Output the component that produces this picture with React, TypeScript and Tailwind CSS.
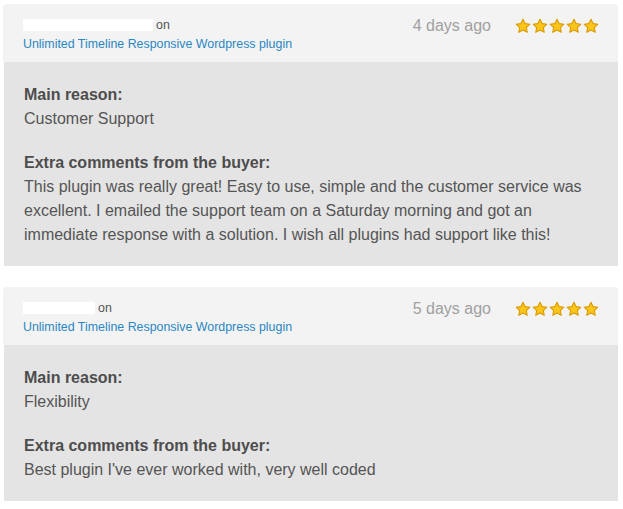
import React from "react";

const reviews = [
  {
    nameWidth: "w-[130px]",
    when: "4 days ago",
    reason: "Customer Support",
    comment:
      "This plugin was really great! Easy to use, simple and the customer service was excellent. I emailed the support team on a Saturday morning and got an immediate response with a solution. I wish all plugins had support like this!",
  },
  {
    nameWidth: "w-[72px]",
    when: "5 days ago",
    reason: "Flexibility",
    comment: "Best plugin I've ever worked with, very well coded",
  },
];

function Star() {
  return (
    <svg width="16" height="16" viewBox="0 0 24 24">
      <path
        d="M12 1.8l3.1 6.6 7.2.9-5.3 5 1.4 7.2L12 18l-6.4 3.5L7 14.3l-5.3-5 7.2-.9z"
        fill="#fbc51b"
        stroke="#d99a00"
        strokeWidth="1.6"
        strokeLinejoin="round"
      />
    </svg>
  );
}

export default function App() {
  return (
    <div className="bg-white min-h-[509px] pt-[4px] pl-[3px] font-['Liberation_Sans',Arial,sans-serif]">
      <div className="w-[615px] flex flex-col gap-[21px]">
        {reviews.map((r, i) => (
          <div key={i}>
            {/* Header */}
            <div className="bg-[#f3f3f3] rounded-t-[4px] h-[58px] pl-[20px] pr-[19px] pt-[11px] flex justify-between">
              <div className="text-[12.4px] leading-[20px]">
                <div className="flex items-center text-[#555]">
                  <span className={`${r.nameWidth} h-[12px] bg-white`} />
                  <span className="ml-[3px]">on</span>
                </div>
                <div className="text-[#2a87c2] -mt-[1px]">Unlimited Timeline Responsive Wordpress plugin</div>
              </div>
              <div className="flex items-start">
                <span className="text-[16px] leading-[22px] text-[#a0a0a0]">{r.when}</span>
                <div className="flex gap-[1px] ml-[24px] mt-[3px]">
                  <Star />
                  <Star />
                  <Star />
                  <Star />
                  <Star />
                </div>
              </div>
            </div>

            {/* Body */}
            <div className="bg-[#e4e4e4] ml-[1px] px-[20px] pt-[21px] pb-[19px] text-[16px] leading-[24px] text-[#555]">
              <div className="font-bold text-[#4d4d4d]">Main reason:</div>
              <div>{r.reason}</div>
              <div className="font-bold text-[#4d4d4d] mt-[20px]">Extra comments from the buyer:</div>
              <div>{r.comment}</div>
            </div>
          </div>
        ))}
      </div>
    </div>
  );
}
